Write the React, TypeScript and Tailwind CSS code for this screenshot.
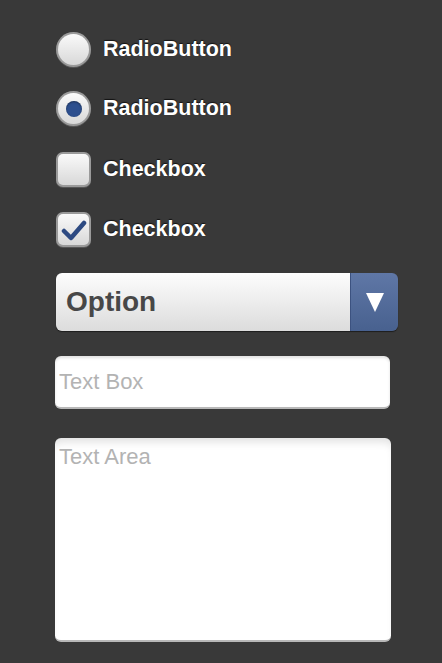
const label =
  "text-[21.5px] font-bold text-white [text-shadow:0_-1px_1px_rgba(0,0,0,0.7)] leading-none";

const Radio = ({ checked }: { checked?: boolean }) => (
  <div className="w-[35px] h-[35px] rounded-full bg-[#9a9a9a] p-[2px] shadow-[0_1px_0_rgba(255,255,255,0.15)]">
    <div className="w-full h-full rounded-full bg-gradient-to-b from-[#fafafa] to-[#d8d8d8] flex items-center justify-center">
      {checked && (
        <div className="w-[16px] h-[16px] rounded-full bg-[#2d4f8e] shadow-[inset_0_1px_2px_rgba(0,0,0,0.4)]" />
      )}
    </div>
  </div>
);

const Checkbox = ({ checked }: { checked?: boolean }) => (
  <div className="w-[35px] h-[35px] rounded-[7px] bg-[#9a9a9a] p-[2px] shadow-[0_1px_0_rgba(255,255,255,0.15)]">
    <div className="w-full h-full rounded-[5px] bg-gradient-to-b from-[#fafafa] to-[#d8d8d8] flex items-center justify-center">
      {checked && (
        <svg width="26" height="22" viewBox="0 0 26 22">
          <path
            d="M3 12 L10 19 L23 4"
            fill="none"
            stroke="#2d4a82"
            strokeWidth="4.5"
            strokeLinecap="round"
            strokeLinejoin="round"
          />
        </svg>
      )}
    </div>
  </div>
);

export default function App() {
  return (
    <div
      className="w-[442px] h-[663px] bg-[#393939] pl-[56px] pt-[32px] flex flex-col"
      style={{ fontFamily: '"Liberation Sans", Arial, sans-serif' }}
    >
      <div className="flex items-center gap-[12px]">
        <Radio />
        <span className={label}>RadioButton</span>
      </div>
      <div className="flex items-center gap-[12px] mt-[24px]">
        <Radio checked />
        <span className={label}>RadioButton</span>
      </div>
      <div className="flex items-center gap-[12px] mt-[26px]">
        <Checkbox />
        <span className={label}>Checkbox</span>
      </div>
      <div className="flex items-center gap-[12px] mt-[25px]">
        <Checkbox checked />
        <span className={label}>Checkbox</span>
      </div>

      <div className="mt-[26px] w-[342px] h-[58px] flex rounded-[6px] overflow-hidden shadow-[0_1px_1px_rgba(0,0,0,0.5)]">
        <div className="flex-1 bg-gradient-to-b from-[#fdfdfd] to-[#dcdcdc] flex items-center pl-[10px]">
          <span className="text-[28px] font-bold text-[#474747] leading-none">Option</span>
        </div>
        <div className="w-[48px] bg-gradient-to-b from-[#5f77a6] to-[#48618f] border-l border-[#3c5280] flex items-center justify-center">
          <svg width="20" height="21" viewBox="0 0 20 21">
            <path d="M1 1 L19 1 L10 20 Z" fill="#fff" />
          </svg>
        </div>
      </div>

      <div className="mt-[25px] -ml-[1px] w-[335px] h-[53px] bg-white rounded-[6px] border-b-2 border-[#b8b8b8] shadow-[inset_0_2px_3px_rgba(0,0,0,0.12)] flex items-center pl-[4px]">
        <span className="text-[22px] text-[#b3b3b3] leading-none">Text Box</span>
      </div>

      <div className="mt-[29px] -ml-[1px] w-[336px] h-[204px] bg-white rounded-[6px] border-b-2 border-[#b8b8b8] shadow-[inset_0_8px_8px_-4px_rgba(0,0,0,0.12)] pl-[4px] pt-[8px]">
        <span className="text-[22px] text-[#b3b3b3] leading-none">Text Area</span>
      </div>
    </div>
  );
}
